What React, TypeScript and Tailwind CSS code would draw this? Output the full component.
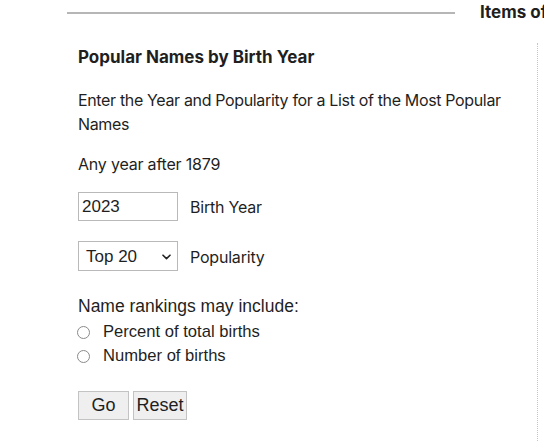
import { useState } from 'react';

const inter = "font-['Inter','Noto_Sans',sans-serif]";
const arial = "font-['Liberation_Sans',Arial,sans-serif]";

function ChevronDown() {
  return (
    <svg width="9" height="6" viewBox="0 0 9 6" className="pointer-events-none absolute right-[7px] top-[13px]">
      <path d="M1 1.2 4.5 4.6 8 1.2" fill="none" stroke="#222" strokeWidth="1.6" strokeLinecap="round" strokeLinejoin="round" />
    </svg>
  );
}

export default function App() {
  const [year, setYear] = useState('2023');
  const [top, setTop] = useState('20');
  const [show, setShow] = useState('');

  return (
    <div className={`h-[442px] w-[544px] overflow-hidden bg-white text-[#1f1f1f] ${inter}`}>
      <div className="flex h-[26px] items-center overflow-hidden">
        <div className="ml-[67px] h-[2px] w-[388px] shrink-0 bg-[#b6b6b6]" />
        <span className="ml-[25px] shrink-0 whitespace-nowrap text-[17px] font-bold">Items of</span>
      </div>

      <div className="flex">
        <div className="w-[537px] shrink-0 pl-[78px] pr-[24px] pt-[20px]">
          <h2 className="text-[17px] font-bold leading-[22px]">Popular Names by Birth Year</h2>

          <p className="mt-[20px] text-[16px] leading-[24px] tracking-[-0.35px]">
            Enter the Year and Popularity for a List of the Most Popular Names
          </p>
          <p className="mt-[16px] text-[16px] leading-[24px] tracking-[-0.2px]">Any year after 1879</p>

          <div className="mt-[16px] flex items-center gap-[12px]">
            <input
              value={year}
              onChange={(e) => setYear(e.target.value)}
              className={`h-[29px] w-[100px] border border-[#b9b9b9] pl-[3px] text-[17px] outline-none ${arial}`}
            />
            <span className="text-[16px] tracking-[-0.2px]">Birth Year</span>
          </div>

          <div className="mt-[20px] flex items-center gap-[12px]">
            <div className="relative">
              <select
                value={top}
                onChange={(e) => setTop(e.target.value)}
                className={`h-[30px] w-[100px] appearance-none border border-[#b9b9b9] bg-white pl-[7px] pt-[2px] text-[17px] outline-none ${arial}`}
              >
                <option value="10">Top 10</option>
                <option value="20">Top 20</option>
                <option value="50">Top 50</option>
                <option value="100">Top 100</option>
              </select>
              <ChevronDown />
            </div>
            <span className="mt-[2px] text-[16px] tracking-[-0.2px]">Popularity</span>
          </div>

          <div className={`mt-[23px] ${arial}`}>
            <p className="text-[17.5px] leading-[24px]">Name rankings may include:</p>
            <div className="mt-[2px] text-[16.6px]">
              {['Percent of total births', 'Number of births'].map((label) => (
                <label key={label} className="flex h-[24px] items-center gap-[8px]">
                  <span
                    onClick={() => setShow(label)}
                    className="ml-[-1px] flex h-[13px] w-[13px] items-center justify-center rounded-full border border-[#8a8a8a] bg-white"
                  >
                    {show === label && <span className="h-[7px] w-[7px] rounded-full bg-[#1f6feb]" />}
                  </span>
                  <span className="ml-[5px]">{label}</span>
                </label>
              ))}
            </div>

            <div className="mt-[23px] flex gap-[4px] text-[18px]">
              <button className="h-[29px] w-[51px] border border-[#c3c3c3] bg-[#efefef]">Go</button>
              <button className="h-[29px] w-[54px] border border-[#c3c3c3] bg-[#efefef]">Reset</button>
            </div>
          </div>
        </div>
        <div className="mt-[17px] h-[420px] border-l border-dotted border-[#c4c4c4]" />
      </div>
    </div>
  );
}
